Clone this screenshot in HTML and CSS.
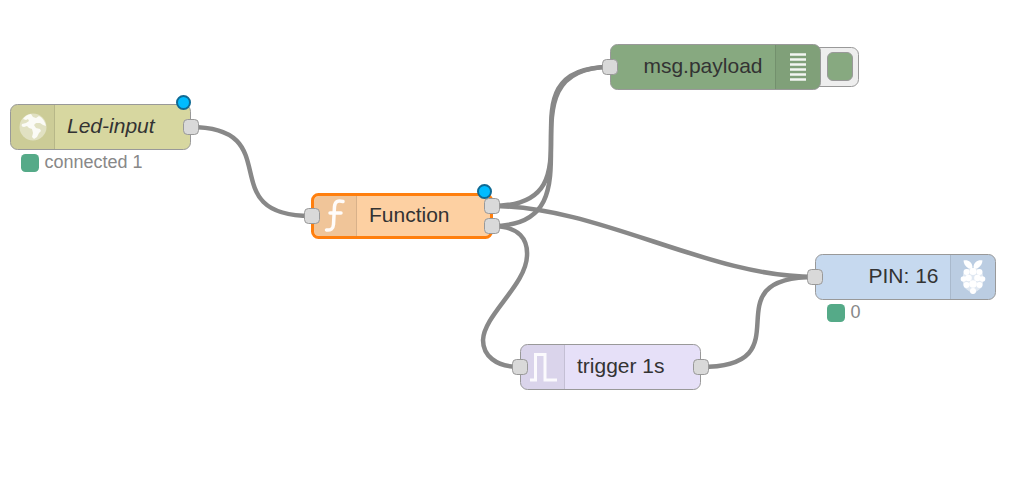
FILE: index.html
```html
<!DOCTYPE html>
<html lang="en">
<head>
<meta charset="utf-8">
<title>Flow</title>
<link rel="stylesheet" href="styles.css">
</head>
<body>
<main class="canvas">
  <svg class="wires" width="1036" height="488" viewBox="0 0 1036 488">
    <path d="M190 127C290 127 210 216 311 216"/>
    <path d="M492 206C610 206 492 67 610 67"/>
    <path d="M492 226C610 226 492 67 610 67"/>
    <path d="M492 206C600 206 707 277 815 277"/>
    <path d="M492 226C520 226 528 240 527 256C526 285 484 315 483 340C483 355 495 367 520 367"/>
    <path d="M700 367C810 367 705 277 815 277"/>
  </svg>

  <div class="node node-inject">
    <div class="icon-cell icon-left">
      <svg class="icon" width="30" height="30" viewBox="0 0 30 30">
        <circle cx="15" cy="15" r="13.5" fill="#fff" fill-opacity=".42"/>
        <path fill="#fff" fill-opacity=".85" d="M13 2c-3 .5-6 2-8 5l3 1 2-1 1 2-3 2-4 1c-1 2 0 3 2 3l3-1 2 2 3 1 1 4-1 4 2 2 3-2 2-4 2-2-1-2-4-1-2-3 2-2 4 0 3 2 3 1c-1-4-3-8-7-10l-3 2-3-1z"/>
      </svg>
    </div>
    <span class="label label-italic">Led-input</span>
    <span class="port port-out-mid"></span>
    <span class="dot"></span>
  </div>
  <div class="status status-inject"><span class="status-dot"></span><span>connected 1</span></div>

  <div class="node node-function">
    <div class="icon-cell icon-left">
      <svg class="icon" width="30" height="36" viewBox="0 0 30 36">
        <path fill="none" stroke="#fff" stroke-opacity=".95" stroke-width="3.500" stroke-linecap="round" d="M23 3.500c-5-1.500-8 0-8.500 5l-1 18c-.3 4.500-3 6-7 5.500M10 15h11"/>
      </svg>
    </div>
    <span class="label">Function</span>
    <span class="port port-in"></span>
    <span class="port port-out-a"></span>
    <span class="port port-out-b"></span>
    <span class="dot"></span>
  </div>

  <div class="node node-debug">
    <span class="label label-end">msg.payload</span>
    <div class="icon-cell icon-right">
      <svg class="icon" width="16" height="30" viewBox="0 0 16 30">
        <path stroke="#fff" stroke-opacity=".9" stroke-width="2.500" d="M0 2.500h16M0 7.500h16M0 12.500h16M0 17.500h16M0 22.500h16M0 27.500h16"/>
      </svg>
    </div>
    <span class="port port-in"></span>
    <span class="debug-button"><span class="debug-fill"></span></span>
  </div>

  <div class="node node-pin">
    <span class="label label-end">PIN: 16</span>
    <div class="icon-cell icon-right">
      <svg class="icon" width="26" height="36" viewBox="0 0 26 36" fill="#fff">
        <path d="M12 10C8 10 4 7 3.500 1.500 8 .5 12 3 12.500 8zM14 10c4 0 8-3 8.500-8.500C18 .5 14 3 13.500 8z"/>
        <path fill-opacity=".55" d="M13 9c6 0 10 3 10 8s1 9-3 13l-7 5-7-5c-4-4-3-8-3-13s4-8 10-8z"/>
        <circle cx="13" cy="12.500" r="3.500"/>
        <circle cx="6.500" cy="13" r="3"/>
        <circle cx="19.500" cy="13" r="3"/>
        <circle cx="3.500" cy="20" r="2.800"/>
        <circle cx="22.500" cy="20" r="2.800"/>
        <circle cx="8.500" cy="19" r="3.300"/>
        <circle cx="17.500" cy="19" r="3.300"/>
        <circle cx="6.500" cy="26" r="3"/>
        <circle cx="19.500" cy="26" r="3"/>
        <circle cx="13" cy="25" r="3.800"/>
        <circle cx="13" cy="32" r="3"/>
      </svg>
    </div>
    <span class="port port-in"></span>
  </div>
  <div class="status status-pin"><span class="status-dot"></span><span>0</span></div>

  <div class="node node-trigger">
    <div class="icon-cell icon-left">
      <svg class="icon" width="30" height="30" viewBox="0 0 30 30">
        <path fill="none" stroke="#fff" stroke-opacity=".88" stroke-width="3" d="M2 28h5.500V2.500H17V28h12"/>
      </svg>
    </div>
    <span class="label">trigger 1s</span>
    <span class="port port-in"></span>
    <span class="port port-out-mid"></span>
  </div>
</main>
</body>
</html>
```

FILE: styles.css
```css
html, body {
  margin: 0;
  background: #fff;
}

.canvas {
  position: relative;
  isolation: isolate;
  width: 1036px;
  height: 488px;
  overflow: hidden;
  font-family: "Liberation Sans", Arial, sans-serif;
}

.wires {
  position: absolute;
  left: 0;
  top: 0;
}

.wires path {
  fill: none;
  stroke: #888;
  stroke-width: 4.500px;
}

.node {
  position: absolute;
  display: flex;
  align-items: center;
  box-sizing: border-box;
  height: 46px;
  width: 181px;
  border: 1.500px solid #999;
  border-radius: 7.500px;
  color: #333;
  font-size: 21px;
}

.node-inject { left: 10px; top: 104px; background: #d7d7a0; }
.node-function { left: 311px; top: 193px; width: 182px; background: #fdd0a2; border: 3px solid #ff7f0e; }
.node-debug { left: 610px; top: 44px; width: 211px; background: #87a980; }
.node-pin { left: 815px; top: 254px; background: #c6d9ef; }
.node-trigger { left: 520px; top: 344px; background: #e6e0f8; }

.icon-cell {
  display: flex;
  align-items: center;
  justify-content: center;
  align-self: stretch;
  flex: none;
  width: 44px;
  box-sizing: border-box;
  background: rgba(0, 0, 0, .05);
}

.node-function .icon-cell { width: 43px; }
.icon-right { width: 45px; }

.icon-left {
  border-right: 1.500px solid rgba(0, 0, 0, .1);
  border-radius: 6px 0 0 6px;
}

.icon-cell.icon-right {
  width: 45px;
  border-left: 1.500px solid rgba(0, 0, 0, .1);
  border-radius: 0 6px 6px 0;
}

.icon { display: block; }

.label {
  flex: 1;
  padding-left: 12px;
  padding-bottom: 2px;
  white-space: nowrap;
}

.label-italic { font-style: italic; }

.label-end {
  padding-left: 0;
  padding-right: 11.500px;
  text-align: right;
}

.node-debug .label-end { padding-right: 12.500px; }

.port {
  position: absolute;
  box-sizing: border-box;
  width: 16px;
  height: 16px;
  background: #d9d9d9;
  border: 1.500px solid #999;
  border-radius: 4.500px;
}

.port-in { left: -9.500px; top: 13.500px; }
.port-out-mid { right: -8.500px; top: 13.500px; }
.node-function .port-in { left: -10px; top: 12px; }
.port-out-a { right: -10px; top: 2px; }
.port-out-b { right: -10px; top: 22px; }

.dot {
  position: absolute;
  right: -1px;
  top: -10.500px;
  box-sizing: border-box;
  width: 15px;
  height: 15px;
  border-radius: 50%;
  background: #00bcff;
  border: 2.500px solid #0f6a94;
}

.node-function .dot { right: -2px; top: -12px; }

.debug-button {
  position: absolute;
  z-index: -1;
  left: 195px;
  top: 1.500px;
  display: flex;
  align-items: center;
  justify-content: flex-end;
  box-sizing: border-box;
  width: 53px;
  height: 40px;
  padding-right: 5px;
  background: #eee;
  border: 1.500px solid #999;
  border-radius: 0 7.500px 7.500px 0;
}

.debug-fill {
  display: block;
  box-sizing: border-box;
  width: 26px;
  height: 29px;
  background: #87a980;
  border: 1.500px solid #999;
  border-radius: 6px;
}

.status {
  position: absolute;
  display: flex;
  align-items: center;
  gap: 5.500px;
  color: #888;
  font-size: 18px;
}

.status-inject { left: 21px; top: 152px; }
.status-pin { left: 827px; top: 302px; }

.status-dot {
  display: block;
  box-sizing: border-box;
  width: 18px;
  height: 18px;
  background: #55aa88;
  border-radius: 4.500px;
}
```
